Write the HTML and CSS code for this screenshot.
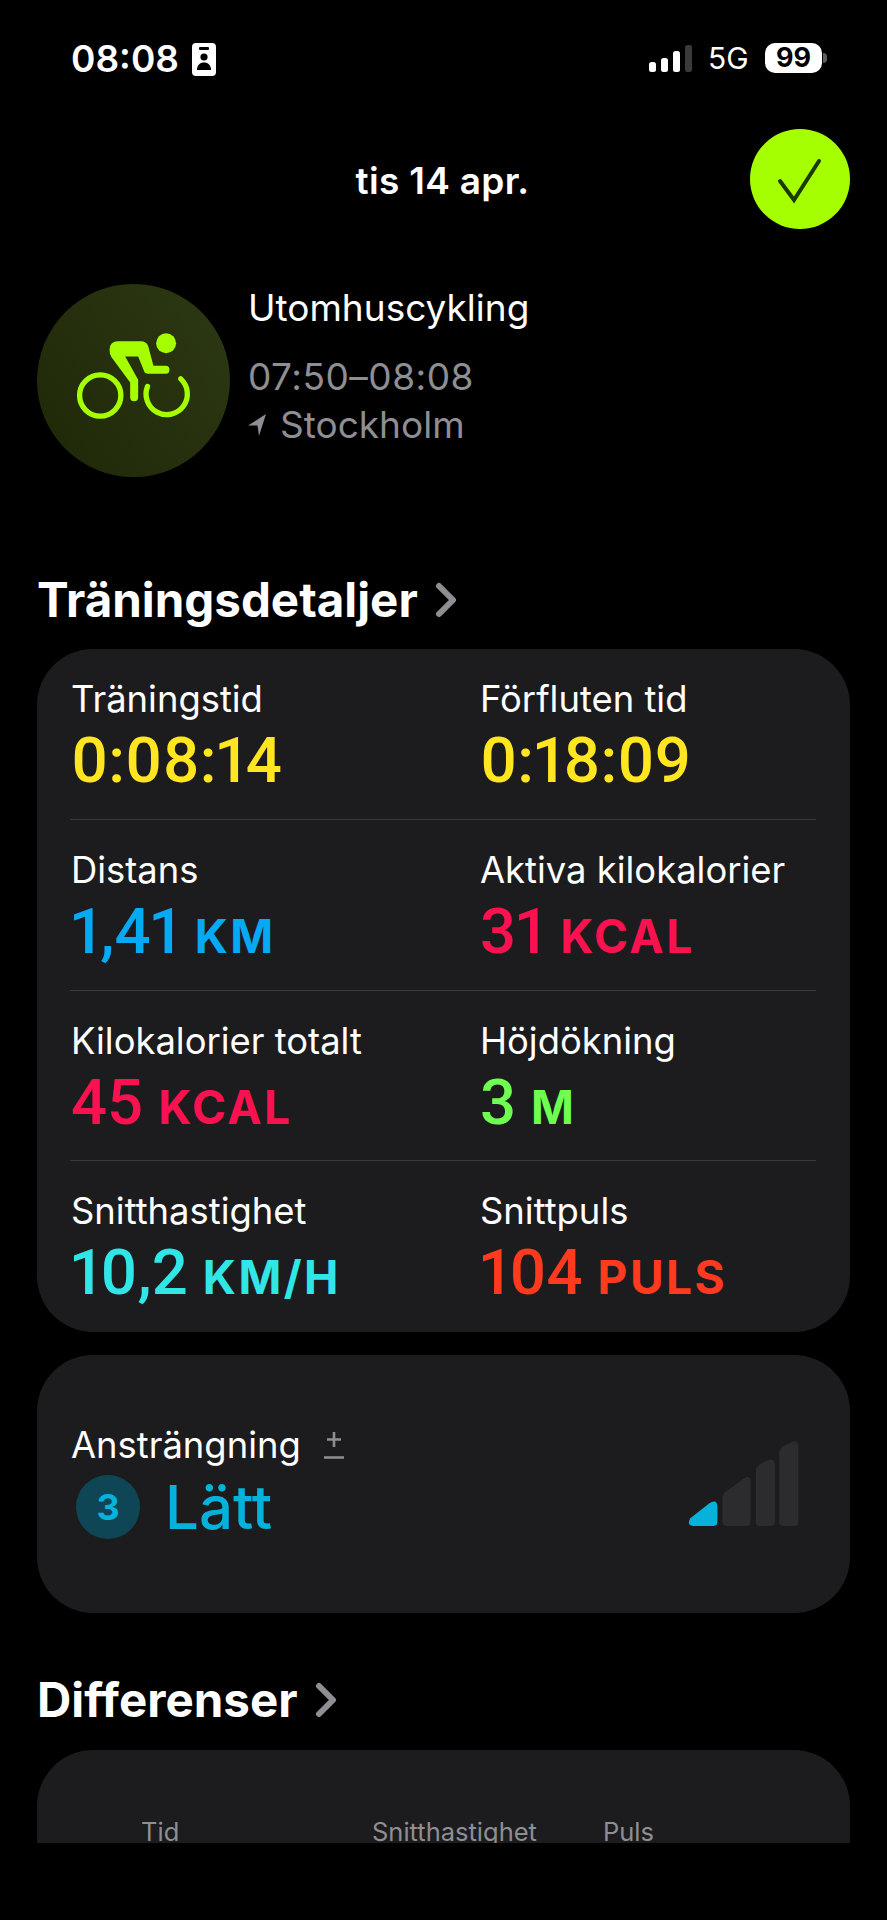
FILE: index.html
```html
<!DOCTYPE html>
<html lang="sv">
<head>
<meta charset="utf-8">
<title>Utomhuscykling</title>
<link rel="stylesheet" href="styles.css">
</head>
<body>
<main class="screen">
  <header class="status">
    <div class="status-left">
      <span class="clock">08:08</span>
      <svg class="focus" viewBox="0 0 24 33"><rect width="24" height="33" rx="4" fill="#fff"/><rect x="7" y="4" width="10" height="3" rx="1" fill="#000"/><circle cx="12" cy="14" r="3.6" fill="#000"/><path d="M5 27c0-5 3-7.500 7-7.500s7 2.500 7 7.500z" fill="#000"/></svg>
    </div>
    <div class="status-right">
      <div class="signal"><i class="b1"></i><i class="b2"></i><i class="b3"></i><i class="b4"></i></div>
      <span class="net">5G</span>
      <span class="battery">99</span>
      <span class="tip"></span>
    </div>
  </header>

  <div class="topbar">
    <span class="date">tis 14 apr.</span>
    <button class="done" aria-label="Klar"><svg viewBox="0 0 100 100"><path d="M30 52 44 71 69 32" fill="none" stroke="#1c3a00" stroke-width="4" stroke-linecap="round" stroke-linejoin="miter"/></svg></button>
  </div>

  <section class="workout">
    <div class="avatar">
      <svg viewBox="18 12 580 580">
        <defs><linearGradient id="disc" x1="0" y1="1" x2="1" y2="0.3"><stop offset="0" stop-color="#1e2808"/><stop offset="1" stop-color="#2b3612"/></linearGradient></defs>
        <circle cx="308" cy="302" r="290" fill="url(#disc)"/>
        <circle cx="406" cy="190" r="30" fill="#a6ff00"/>
        <path fill="#a6ff00" d="M262 184H330Q346 184 352 198L368 258H405Q416 258 416 270Q416 282 405 282H352Q342 282 339 272L322 230H283L322 300V352Q322 364 310 364Q298 364 298 352V308L242 232Q236 222 236 210Q236 184 262 184Z"/>
        <circle cx="208" cy="347" r="62" fill="none" stroke="#a6ff00" stroke-width="16"/>
        <path d="M350 320A62 62 0 1 0 450 297" fill="none" stroke="#a6ff00" stroke-width="16" stroke-linecap="round"/>
      </svg>
    </div>
    <div class="workout-text">
      <div class="workout-name">Utomhuscykling</div>
      <div class="workout-time">07:50–08:08</div>
      <div class="workout-place"><svg class="arrow" viewBox="0 0 18 22"><path d="M18 0 0 11.500h9.500L11 22z" fill="#8e8e93"/></svg>Stockholm</div>
    </div>
  </section>

  <h2 class="section first">Träningsdetaljer<svg class="chev" viewBox="0 0 24 36"><path d="M5 4 19 18 5 32" fill="none" stroke="#8e8e93" stroke-width="6" stroke-linecap="round" stroke-linejoin="round"/></svg></h2>

  <section class="card stats">
    <div class="stat"><div class="label">Träningstid</div><div class="value yellow">0:08:14</div></div>
    <div class="stat"><div class="label">Förfluten tid</div><div class="value yellow">0:18:09</div></div>
    <div class="stat"><div class="label">Distans</div><div class="value blue">1,41<span class="unit">KM</span></div></div>
    <div class="stat"><div class="label">Aktiva kilokalorier</div><div class="value pink">31<span class="unit">KCAL</span></div></div>
    <div class="stat"><div class="label">Kilokalorier totalt</div><div class="value pink">45<span class="unit">KCAL</span></div></div>
    <div class="stat"><div class="label">Höjdökning</div><div class="value green">3<span class="unit">M</span></div></div>
    <div class="stat"><div class="label">Snitthastighet</div><div class="value cyan">10,2<span class="unit">KM/H</span></div></div>
    <div class="stat"><div class="label">Snittpuls</div><div class="value red">104<span class="unit">PULS</span></div></div>
  </section>

  <section class="card effort">
    <div class="effort-text">
      <div class="label">Ansträngning<svg class="plusminus" viewBox="0 0 20 28"><path d="M10 1V16M3 8.500H17M0 26.500H20" fill="none" stroke="#8e8e93" stroke-width="2.600"/></svg></div>
      <div class="effort-level"><span class="badge">3</span><span class="level">Lätt</span></div>
    </div>
    <svg class="meter" viewBox="85 60 335 260">
      <path fill="#06b2dc" d="M92 294 148 250Q173 234 173 262V305Q173 317 160 317H100Q80 315 92 294Z"/>
      <path fill="#2c2c2f" d="M188 232Q188 222 198 215L252 175Q272 162 272 185V305Q272 317 260 317H200Q188 317 188 305Z"/>
      <path fill="#2c2c2f" d="M288 152Q288 142 298 134L325 120Q345 112 345 135V305Q345 317 333 317H300Q288 317 288 305Z"/>
      <path fill="#2c2c2f" d="M358 97Q358 87 368 79L395 66Q415 58 415 80V305Q415 317 403 317H370Q358 317 358 305Z"/>
    </svg>
  </section>

  <h2 class="section second">Differenser<svg class="chev" viewBox="0 0 24 36"><path d="M5 4 19 18 5 32" fill="none" stroke="#8e8e93" stroke-width="6" stroke-linecap="round" stroke-linejoin="round"/></svg></h2>

  <section class="card splits">
    <span class="col col-time">Tid</span>
    <span class="col col-speed">Snitthastighet</span>
    <span class="col col-pulse">Puls</span>
  </section>
</main>
</body>
</html>
```
FILE: styles.css
```css
* { box-sizing: border-box; }
html, body { margin: 0; background: #000; }
.screen {
  width: 887px;
  height: 1843px;
  overflow: hidden;
  padding: 0 37px;
  color: #fff;
  font-family: Inter, "Liberation Sans", sans-serif;
}
.status {
  height: 118px;
  padding: 38px 23px 0 34px;
  display: flex;
  justify-content: space-between;
  align-items: flex-start;
}
.status-left { display: flex; align-items: center; gap: 13px; height: 42px; }
.clock { font-size: 37px; font-weight: 600; line-height: 42px; }
.focus { width: 24px; height: 33px; display: block; }
.status-right { display: flex; align-items: center; height: 42px; position: relative; top: -1px; }
.signal { display: flex; align-items: flex-end; gap: 4.7px; width: 43px; height: 27px; margin-right: 16px; }
.signal i { display: block; width: 7.3px; background: #fff; border-radius: 2.5px; }
.signal .b1 { height: 10px; }
.signal .b2 { height: 14px; }
.signal .b3 { height: 21px; }
.signal .b4 { height: 27px; background: #3a3a3c; }
.net { font-size: 30px; line-height: 42px; width: 41px; margin-right: 16px; white-space: nowrap; }
.battery {
  width: 57px; height: 30px; border-radius: 10px;
  background: #fff; color: #000;
  font-size: 27px; font-weight: 700; line-height: 30px; text-align: center;
}
.tip { width: 4px; height: 10px; margin-left: 1px; background: #5e5e60; border-radius: 0 4px 4px 0; }

.topbar { height: 112px; position: relative; display: flex; align-items: center; justify-content: center; padding-top: 10px; }
.date { font-size: 37px; font-weight: 600; line-height: 44px; margin-top: 3px; margin-left: -2px; letter-spacing: .3px; }
.done {
  position: absolute; right: 0; top: 11px;
  width: 100px; height: 100px; padding: 0; border: 0;
  border-radius: 50%; background: #a6ff00;
}
.done svg { display: block; width: 100px; height: 100px; }

.workout { margin-top: 54px; display: flex; align-items: flex-start; gap: 18px; height: 193px; }
.avatar { width: 193px; height: 193px; flex: none; }
.avatar svg { display: block; width: 193px; height: 193px; }
.workout-name { font-size: 37px; line-height: 48px; }
.workout-time { font-size: 37px; line-height: 48px; margin-top: 21px; color: #8e8e93; letter-spacing: .5px; }
.workout-place { font-size: 37px; line-height: 47px; color: #8e8e93; display: flex; align-items: center; gap: 14px; }
.arrow { width: 18px; height: 22px; display: block; }

.section { margin: 0; font-size: 47.500px; line-height: 56px; font-weight: 700; display: flex; align-items: center; gap: 16px; }
.section.first { margin-top: 95px; }
.section.second { margin-top: 59px; }
.chev { width: 24px; height: 36px; display: block; }

.card { background: #1c1c1e; border-radius: 56px; }
.stats {
  margin-top: 21px;
  padding: 0 34px 0 33px;
  display: grid;
  grid-template-columns: 409px 1fr;
  height: 683px;
}
.stat { padding-top: 28px; height: 170px; }
.stat:nth-child(n+3) { border-top: 1px solid #38383a; }
.stat:nth-child(n+7) { height: 172px; }
.label { font-size: 36.400px; line-height: 44px; padding-left: 1px; display: flex; align-items: flex-start; }
.value { font-family: Roboto, sans-serif; font-size: 63.500px; line-height: 68px; font-weight: 500; padding-left: 1px; margin-top: 6px; font-variant-numeric: proportional-nums; }
.unit { font-family: Inter, sans-serif; font-size: 46px; font-weight: 700; margin-left: 15px; letter-spacing: 2.500px; }
.yellow { color: #ffe620; }
.blue { color: #05a9f4; }
.pink { color: #fa114f; }
.green { color: #6fff50; }
.cyan { color: #30e6e6; }
.red { color: #ff3a1e; }

.effort {
  margin-top: 23px;
  height: 258px;
  padding: 68px 50px 0 33px;
  display: flex;
  justify-content: space-between;
  align-items: flex-start;
}
.plusminus { width: 20px; height: 28px; display: block; margin: 8px 0 0 23px; }
.effort-level { display: flex; align-items: center; gap: 25px; margin-top: 8px; padding-left: 6px; }
.badge {
  width: 64px; height: 64px; border-radius: 50%;
  background: #0f4656; color: #06b2dc;
  font-size: 36px; font-weight: 700; line-height: 64px; text-align: center;
}
.level { font-size: 60px; font-weight: 500; line-height: 64px; color: #06b2dc; }
.meter { width: 112px; height: 87px; display: block; margin-top: 17px; }

.splits { margin-top: 22px; height: 200px; padding: 67px 0 0 0; color: #8e8e93; font-size: 25.500px; line-height: 30px; display: flex; }
.col { display: block; }
.col-time { margin-left: 104px; width: 231px; }
.col-speed { width: 231px; }
```
